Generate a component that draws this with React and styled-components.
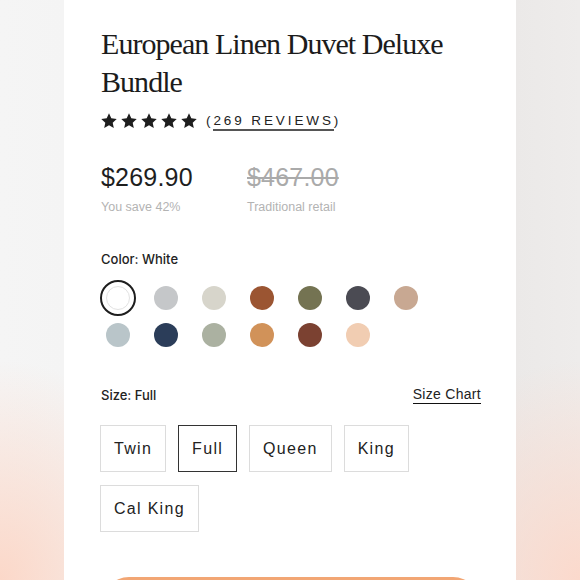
import React from 'react'
import styled, { createGlobalStyle } from 'styled-components'

const GlobalStyle = createGlobalStyle`
    html, body {
        margin: 0;
        padding: 0;
        height: 100%;
    }
    body {
        font-family: "Liberation Sans", Arial, sans-serif;
        color: #222;
        overflow: hidden;
        background:
            radial-gradient(ellipse 180px 220px at 0% 100%, rgba(252, 214, 198, 0.95), rgba(252, 214, 198, 0) 100%),
            radial-gradient(ellipse 180px 220px at 100% 100%, rgba(252, 216, 202, 0.95), rgba(252, 216, 202, 0) 100%),
            linear-gradient(to right, #f5f5f5 0%, #f4f4f4 11%, #ebe9e8 89%, #eeeceb 100%);
    }
`

const colors = [
    '#ffffff', '#c5c7c9', '#d7d5cb', '#9b5532', '#747352', '#4b4b53', '#c8a892',
    '#b9c5c9', '#2b3d59', '#abb1a1', '#d19259', '#7b4131', '#f1cdb2',
]

const sizes = ['Twin', 'Full', 'Queen', 'King', 'Cal King']

function Star() {
    return (
        <svg width="16" height="15" viewBox="0 0 24 23">
            <path d="M12 0.5l3.53 7.6 8.32.98-6.15 5.7 1.63 8.22L12 18.9l-7.33 4.1 1.63-8.22L.15 9.08l8.32-.98z" fill="#1e1e1e" />
        </svg>
    )
}

function App() {
    const selectedColor = 0
    const selectedSize = 'Full'

    return (
        <Page>
            <GlobalStyle />
            <Panel>
                <Title>European Linen Duvet Deluxe Bundle</Title>

                <Rating>
                    <Stars>
                        {[0, 1, 2, 3, 4].map(i => <Star key={i} />)}
                    </Stars>
                    <Reviews>(<span>269 REVIEWS</span>)</Reviews>
                </Rating>

                <Prices>
                    <div>
                        <Price>$269.90</Price>
                        <PriceNote>You save 42%</PriceNote>
                    </div>
                    <div>
                        <Price old>$467.00</Price>
                        <PriceNote>Traditional retail</PriceNote>
                    </div>
                </Prices>

                <ColorLabel>Color: White</ColorLabel>
                <Swatches>
                    {colors.map((c, i) => (
                        <SwatchCell key={i} selected={i === selectedColor}>
                            <Swatch style={{ background: c }} light={c === '#ffffff'} />
                        </SwatchCell>
                    ))}
                </Swatches>

                <SizeHeader>
                    <Label>Size: Full</Label>
                    <ChartLink>Size Chart</ChartLink>
                </SizeHeader>
                <SizeGrid>
                    {sizes.map(s => (
                        <SizeButton key={s} active={s === selectedSize}>{s}</SizeButton>
                    ))}
                </SizeGrid>

                {/* add to cart button, only its top edge is in view */}
                <CartButton aria-label="Add to cart" />
            </Panel>
        </Page>
    )
}

const Page = styled.div`
    display: flex;
    justify-content: center;
    height: 580px;
    overflow: hidden;
`

const Panel = styled.div`
    width: 452px;
    box-sizing: border-box;
    background: #fff;
    padding: 25px 35px 0 37px;
    display: flex;
    flex-direction: column;
`

const Title = styled.h1`
    margin: 0;
    font-family: "Liberation Serif", "Times New Roman", serif;
    font-weight: 400;
    font-size: 30px;
    line-height: 38px;
    letter-spacing: -0.95px;
    color: #1c1c1c;
    width: 360px;
`

const Rating = styled.div`
    display: flex;
    align-items: center;
    margin-top: 12px;
    height: 20px;
`

const Stars = styled.div`
    display: flex;
    gap: 4px;
`

const Reviews = styled.div`
    margin-left: 9px;
    font-size: 13.5px;
    letter-spacing: 2.9px;
    color: #222;
    span {
        border-bottom: 2px solid #555;
        padding-bottom: 1px;
    }
`

const Prices = styled.div`
    display: grid;
    grid-template-columns: 146px auto;
    margin-top: 33px;
`

const Price = styled.div`
    font-size: 25px;
    line-height: 32px;
    letter-spacing: 0.2px;
    color: ${p => p.old ? '#aaa' : '#1e1e1e'};
    text-decoration: ${p => p.old ? 'line-through' : 'none'};
    text-decoration-thickness: 1.5px;
`

const PriceNote = styled.div`
    margin-top: 7px;
    font-size: 12.5px;
    color: #b3b3b3;
`

const Label = styled.div`
    font-family: Inter, "Liberation Sans", sans-serif;
    font-weight: 500;
    font-size: 13px;
    color: #222;
`

const ColorLabel = styled(Label)`
    margin-top: 37px;
`

const Swatches = styled.div`
    display: grid;
    grid-template-columns: repeat(7, 36px);
    column-gap: 12px;
    row-gap: 1px;
    margin-top: 13px;
    margin-left: -1px;
`

const SwatchCell = styled.div`
    width: 36px;
    height: 36px;
    box-sizing: border-box;
    border-radius: 50%;
    display: flex;
    align-items: center;
    justify-content: center;
    border: 2px solid ${p => p.selected ? '#1e1e1e' : 'transparent'};
`

const Swatch = styled.div`
    width: 24px;
    height: 24px;
    box-sizing: border-box;
    border-radius: 50%;
    border: ${p => p.light ? '1.5px solid #e2e2e2' : 'none'};
`

const SizeHeader = styled.div`
    display: flex;
    justify-content: space-between;
    align-items: center;
    margin-top: 33px;
`

const ChartLink = styled.a`
    font-size: 14px;
    letter-spacing: 0.3px;
    color: #222;
    border-bottom: 1.5px solid #111;
    padding-bottom: 1px;
    cursor: pointer;
`

const SizeGrid = styled.div`
    display: flex;
    flex-wrap: wrap;
    gap: 13px 12px;
    margin-top: 21px;
    margin-left: -1px;
`

const SizeButton = styled.button`
    height: 47px;
    box-sizing: border-box;
    padding: 0 13px;
    background: #fff;
    border: 1.5px solid ${p => p.active ? '#333' : '#dcdcdc'};
    font-family: "Liberation Sans", Arial, sans-serif;
    font-size: 16px;
    letter-spacing: 1.3px;
    color: #222;
`

const CartButton = styled.button`
    margin-top: 45px;
    height: 56px;
    flex-shrink: 0;
    border: none;
    border-radius: 40px;
    background: #f2a674;
`

export default App
